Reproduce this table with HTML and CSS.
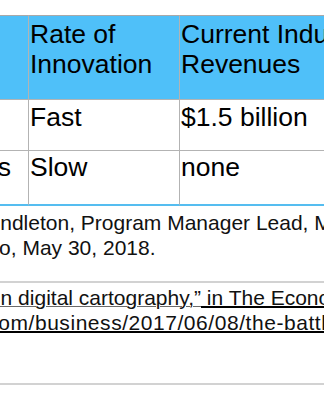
FILE: index.html
```html
<!DOCTYPE html>
<html lang="en">
<head>
<meta charset="utf-8">
<title>Table</title>
<link rel="stylesheet" href="styles.css">
</head>
<body>
<div class="page">
  <table class="grid">
    <colgroup><col class="c1"><col class="c2"><col class="c3"></colgroup>
    <thead>
      <tr><th>Type</th><th>Rate of Innovation</th><th>Current Industry Revenues</th></tr>
    </thead>
    <tbody>
      <tr class="r1"><td>HD maps</td><td>Fast</td><td>$1.5 billion</td></tr>
      <tr class="r2"><td>Paper maps</td><td>Slow</td><td>none</td></tr>
    </tbody>
  </table>

  <p class="note note1">
    <span class="line">Interview with Steve Pendleton, Program Manager Lead, Microsoft Maps,</span>
    <span class="line">Interview, San Francisco, May 30, 2018.</span>
  </p>
  <div class="rule rule1"></div>
  <p class="note note2">
    <span class="line"><a class="link" href="#"><span class="ul-a">3 “The battle for control in digital cartography,”</span><span class="ul-b"> in The Economist,</span></a></span>
    <span class="line"><a class="link" href="#"><span class="ul-b">https://www.economist.c</span><span class="ul-b url">om/business/2017/06/08/the-battle-for-control-of-digital-cartography</span></a></span>
  </p>
  <div class="rule rule2"></div>
</div>
</body>
</html>
```

FILE: styles.css
```css
html, body {
  margin: 0;
  padding: 0;
  overflow: hidden;
  background: #ffffff;
}
body {
  font-family: "Liberation Sans", Arial, sans-serif;
  color: #111111;
}
.page {
  padding-top: 15px;
}
.grid {
  border-collapse: separate;
  border-spacing: 0;
  table-layout: fixed;
  width: 553px;
  margin-left: -134px;
  font-size: 26.5px;
  line-height: 30px;
}
.c1 { width: 162px; }
.c2 { width: 151px; }
.c3 { width: 240px; }
.grid th,
.grid td {
  text-align: left;
  vertical-align: top;
  font-weight: normal;
  padding: 0 0 0 1px;
  border-left: 1px solid #b3b3b3;
  color: #000000;
}
.grid th {
  background: #4fc0f9;
  border-top: 1px solid #a9a9a9;
  padding-top: 3px;
  padding-bottom: 20px;
}
.r1 td {
  border-top: 1px solid #b3b3b3;
  padding-top: 2px;
  padding-bottom: 18px;
}
.r2 td {
  border-top: 1px solid #b3b3b3;
  border-bottom: 2px solid #55bdf0;
  padding-top: 1px;
  padding-bottom: 22px;
}
.note {
  font-size: 21px;
  line-height: 25px;
  white-space: nowrap;
  margin: 0;
  color: #111111;
}
.line {
  display: block;
}
.note1 {
  margin: 4px 0 0 -218px;
}
.note2 {
  margin: 2px 0 0 -227px;
}
.rule {
  height: 2px;
  background: #d2d2d2;
}
.rule1 { margin-top: 21px; }
.rule2 { margin-top: 48px; }
.link {
  color: #111111;
  text-decoration: none;
}
.ul-a {
  text-decoration: underline;
  text-decoration-color: #6a6a6a;
  text-decoration-thickness: 1px;
}
.ul-b {
  text-decoration: underline;
  text-decoration-color: #000000;
  text-decoration-thickness: 2px;
}
.url {
  letter-spacing: 0.55px;
}
```
